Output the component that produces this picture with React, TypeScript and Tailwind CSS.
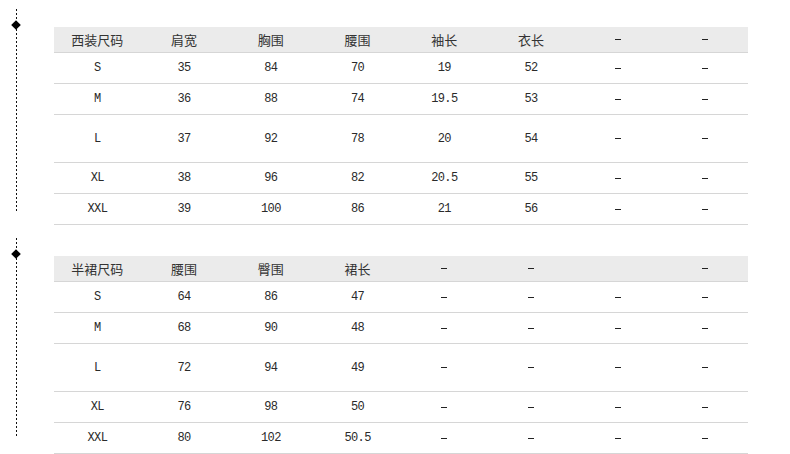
import React from "react";

type Table = {
  head: string[];
  rows: string[][];
};

const suit: Table = {
  head: ["西装尺码", "肩宽", "胸围", "腰围", "袖长", "衣长", "-", "-"],
  rows: [
    ["S", "35", "84", "70", "19", "52", "-", "-"],
    ["M", "36", "88", "74", "19.5", "53", "-", "-"],
    ["L", "37", "92", "78", "20", "54", "-", "-"],
    ["XL", "38", "96", "82", "20.5", "55", "-", "-"],
    ["XXL", "39", "100", "86", "21", "56", "-", "-"],
  ],
};

const skirt: Table = {
  head: ["半裙尺码", "腰围", "臀围", "裙长", "-", "-", "", "-"],
  rows: [
    ["S", "64", "86", "47", "-", "-", "-", "-"],
    ["M", "68", "90", "48", "-", "-", "-", "-"],
    ["L", "72", "94", "49", "-", "-", "-", "-"],
    ["XL", "76", "98", "50", "-", "-", "-", "-"],
    ["XXL", "80", "102", "50.5", "-", "-", "-", "-"],
  ],
};

function Cell({ text, head }: { text: string; head?: boolean }) {
  if (text === "-") {
    return (
      <div className="flex items-center justify-center">
        <span className="block w-[6px] h-px bg-[#222]" />
      </div>
    );
  }
  return (
    <div
      className={
        head
          ? "flex items-center justify-center text-[13px] text-[#333] font-['Noto_Sans_CJK_SC',sans-serif]"
          : "flex items-center justify-center text-[12px] text-[#2a2a2a] tracking-[-0.6px] font-['Liberation_Mono',monospace]"
      }
    >
      {text}
    </div>
  );
}

function SizeTable({ data, railH }: { data: Table; railH: string }) {
  return (
    <div className="flex">
      {/* left rail: dotted line + diamond */}
      <div className="w-[54px] shrink-0">
        <div className={"relative ml-[16px] w-px " + railH + " bg-[repeating-linear-gradient(to_bottom,#111_0_2px,transparent_2px_4px)]"}>
          <div className="absolute left-[-4px] top-[12px] w-[8px] h-[8px] bg-black rotate-45 scale-[0.85]" />
        </div>
      </div>
      <div className="w-[694px] mt-[18px]">
        <div className="grid grid-cols-8 h-[26px] bg-[#ebebeb] border-b border-[#d6d6d6]">
          {data.head.map((h, i) => (
            <Cell key={i} text={h} head />
          ))}
        </div>
        {data.rows.map((r, ri) => (
          <div
            key={ri}
            className={
              "grid grid-cols-8 border-b border-[#d6d6d6] " +
              (ri === 2 ? "h-[48px]" : "h-[31px]")
            }
          >
            {r.map((c, ci) => (
              <Cell key={ci} text={c} />
            ))}
          </div>
        ))}
      </div>
    </div>
  );
}

export default function App() {
  return (
    <div className="w-[790px] h-[454px] bg-white overflow-hidden pt-[9px]">
      <SizeTable data={suit} railH="h-[203px]" />
      <div className="mt-[13px]">
        <SizeTable data={skirt} railH="h-[200px]" />
      </div>
    </div>
  );
}
